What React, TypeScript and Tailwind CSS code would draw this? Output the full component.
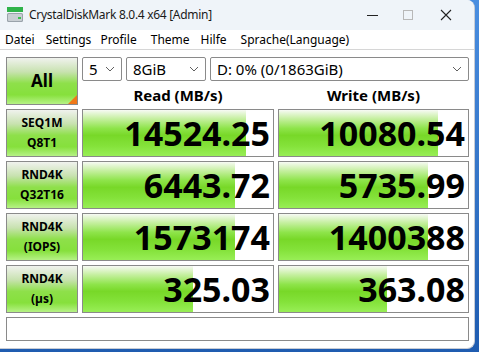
import React from "react";

const rows = [
  { l1: "SEQ1M", l2: "Q8T1", read: "14524.25", write: "10080.54", rp: 86, wp: 84 },
  { l1: "RND4K", l2: "Q32T16", read: "6443.72", write: "5735.99", rp: 80, wp: 79 },
  { l1: "RND4K", l2: "(IOPS)", read: "1573174", write: "1400388", rp: 80, wp: 79 },
  { l1: "RND4K", l2: "(µs)", read: "325.03", write: "363.08", rp: 58, wp: 57 },
];

const barGrad =
  "bg-[linear-gradient(to_bottom,#f7faf4_0%,#c8f0a4_18%,#8ee44a_40%,#78d828_55%,#84e23a_78%,#98ee56_100%)]";
const labelGrad =
  "bg-[linear-gradient(to_bottom,#f0f2ee_0%,#c8e2b0_30%,#8ee04a_55%,#86e03c_80%,#b6f286_100%)]";

function Chevron() {
  return (
    <svg width="10" height="6" viewBox="0 0 10 6" className="shrink-0">
      <path d="M1 1 L5 5 L9 1" fill="none" stroke="#606060" strokeWidth="1" />
    </svg>
  );
}

function Select({ w, text }: { w: string; text: string }) {
  return (
    <div className={`${w} h-[24px] flex items-center justify-between border border-[#8a8a8a] rounded-[2px] bg-white pl-[6px] pr-[6px] text-[15px] text-black`}>
      <span>{text}</span>
      <Chevron />
    </div>
  );
}

function Bar({ value, pct }: { value: string; pct: number }) {
  return (
    <div className="relative h-[48px] border border-[#8a8a8a] bg-white overflow-hidden">
      <div className={`absolute left-0 top-0 bottom-0 ${barGrad}`} style={{ width: `${pct}%` }} />
      <div className="relative h-full flex items-center justify-end pr-[3px] text-[34px] font-bold text-black leading-none">
        {value}
      </div>
    </div>
  );
}

export default function App() {
  return (
    <div className="w-[479px] h-[352px] bg-[linear-gradient(to_bottom,#4a8ee0,#1f5cb0)] overflow-hidden" style={{ fontFamily: '"Noto Sans", "Liberation Sans", sans-serif' }}>
      <div className="w-[475px] h-[349px] bg-white rounded-tr-[8px] rounded-br-[8px] overflow-hidden border-r border-b border-[#c8ccd4] flex flex-col">
        {/* title bar */}
        <div className="h-[30px] bg-[#eff4f9] flex items-center shrink-0">
          <svg width="18" height="16" viewBox="0 0 18 16" className="ml-[6px]">
            <rect x="1" y="0" width="16" height="5" fill="#2fb34a" />
            <rect x="1" y="6" width="16" height="9" rx="1.5" fill="#9aa3ab" />
            <rect x="2" y="7" width="14" height="7" rx="1" fill="#c9cfd4" />
            <rect x="12" y="10" width="3" height="2" fill="#3cc050" />
          </svg>
          <span className="ml-[5px] text-[12px] text-[#1a1a1a] tracking-[-0.3px]">CrystalDiskMark 8.0.4 x64 [Admin]</span>
          <div className="ml-auto flex items-center h-full">
            <div className="w-[36px] h-full flex items-center justify-center">
              <div className="w-[11px] h-[1px] bg-[#222]" />
            </div>
            <div className="w-[36px] h-full flex items-center justify-center">
              <div className="w-[10px] h-[10px] border border-[#b8b8b8]" />
            </div>
            <div className="w-[40px] h-full flex items-center justify-center mr-[8px]">
              <svg width="12" height="12" viewBox="0 0 12 12">
                <path d="M1 1 L11 11 M11 1 L1 11" stroke="#222" strokeWidth="1.1" />
              </svg>
            </div>
          </div>
        </div>
        {/* menu */}
        <div className="h-[20px] flex items-center text-[12px] text-black border-b border-[#d6d6d6] shrink-0">
          <span className="ml-[5px]">Datei</span>
          <span className="ml-[11px]">Settings</span>
          <span className="ml-[9px]">Profile</span>
          <span className="ml-[14px]">Theme</span>
          <span className="ml-[11px]">Hilfe</span>
          <span className="ml-[14px]">Sprache(Language)</span>
        </div>
        {/* content */}
        <div className="pl-[6px] pt-[7px] flex flex-col gap-[4px]">
          <div className="flex gap-[4px]">
            <div className={`relative w-[72px] h-[48px] border border-[#8a8a8a] ${labelGrad} flex items-center justify-center text-[17px] font-bold text-black`}>
              All
              <div className="absolute right-0 bottom-0 w-0 h-0 border-l-[9px] border-l-transparent border-b-[9px] border-b-[#f07818]" />
            </div>
            <div className="flex flex-col">
              <div className="flex gap-[4px]">
                <Select w="w-[40px]" text="5" />
                <Select w="w-[80px]" text="8GiB" />
                <Select w="w-[259px]" text="D: 0% (0/1863GiB)" />
              </div>
              <div className="flex gap-[4px] mt-[4px] text-[15px] font-bold text-black leading-[20px]">
                <div className="w-[192px] text-center">Read (MB/s)</div>
                <div className="w-[191px] text-center">Write (MB/s)</div>
              </div>
            </div>
          </div>
          {rows.map((r, i) => (
            <div key={i} className="grid grid-cols-[72px_192px_191px] gap-[4px]">
              <div className={`h-[48px] border border-[#8a8a8a] ${labelGrad} flex flex-col items-center justify-center text-[12px] font-bold text-black leading-[20px]`}>
                <span>{r.l1}</span>
                <span>{r.l2}</span>
              </div>
              <Bar value={r.read} pct={r.rp} />
              <Bar value={r.write} pct={r.wp} />
            </div>
          ))}
          <div className="w-[463px] h-[24px] border border-[#8a8a8a] bg-white" />
        </div>
      </div>
    </div>
  );
}
